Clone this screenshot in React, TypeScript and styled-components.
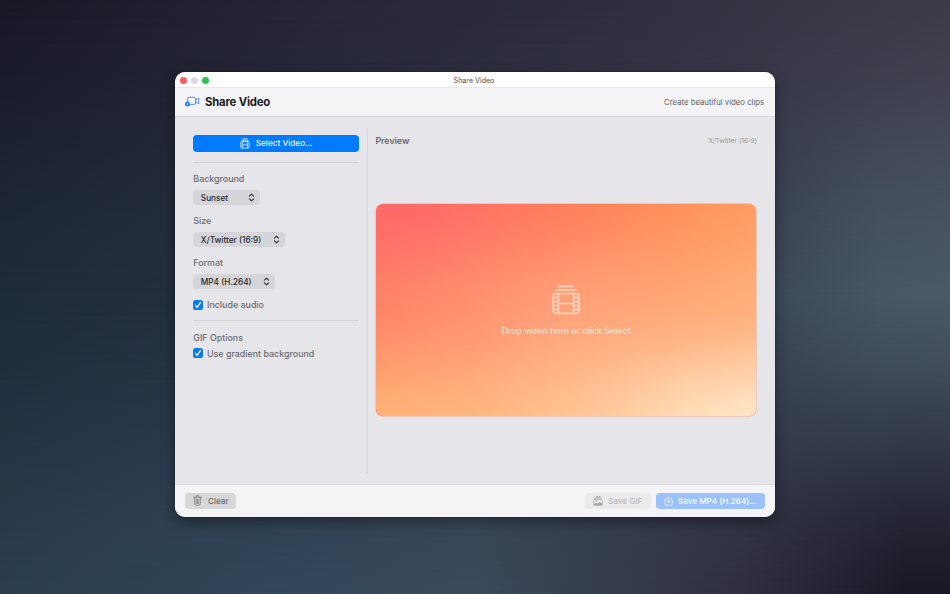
import React from "react";
import styled, { createGlobalStyle, css } from "styled-components";

const Global = createGlobalStyle`
  * { box-sizing: border-box; }
  html, body { margin: 0; padding: 0; }
  body { font-family: Inter, "Liberation Sans", sans-serif; font-size: 9px; overflow: hidden; }
  button { font-family: inherit; border: 0; margin: 0; padding: 0; }
  svg { display: block; flex: none; }
`;

type MeshRows = { top: string; middle: string; bottom: string };

/* A three-row colour mesh: every row is a horizontal ramp faded over the one above it. */
const mesh = ({ top, middle, bottom }: MeshRows) => css`
  position: relative;
  isolation: isolate;
  background: linear-gradient(to right, ${top});
  &::before, &::after {
    content: "";
    position: absolute;
    inset: 0;
    z-index: -1;
  }
  &::before {
    background: linear-gradient(to right, ${middle});
    mask-image: linear-gradient(to bottom, transparent, rgba(0, 0, 0, 0.2) 12%, rgba(0, 0, 0, 0.8) 38%, #000 50%);
  }
  &::after {
    background: linear-gradient(to right, ${bottom});
    mask-image: linear-gradient(to bottom, transparent 50%, rgba(0, 0, 0, 0.2) 62%, rgba(0, 0, 0, 0.8) 88%, #000);
  }
`;

const Desktop = styled.div`
  width: 950px;
  height: 594px;
  display: grid;
  justify-content: center;
  align-content: start;
  padding-top: 71.6px;
  ${mesh({
    top: "#1a1827, #272636 35%, #302e3e 65%, #3f3a49",
    middle: "#1e2b3b, #2a3544 40%, #3b4857 80%, #475866 93%, #4a5a68",
    bottom: "#2b3d4c, #33475a 30%, #3b4a5a 50%, #302f40 78%, #1b1726 95%",
  })}
`;

const Window = styled.main`
  width: 599.4px;
  height: 445px;
  display: flex;
  flex-direction: column;
  border-radius: 10px;
  overflow: hidden;
  background: #e6e5ea;
  box-shadow: 0 0 1px rgba(0, 0, 0, 0.6), 0 5px 14px rgba(0, 0, 0, 0.4);
`;

const TitleBar = styled.header`
  flex: none;
  height: 15.4px;
  display: grid;
  grid-template-columns: 60px 1fr 62px;
  align-items: center;
  background: #fff;
  color: #4c4c4e;
  font-size: 7.1px;
  line-height: 15px;
  text-align: center;
`;

const WindowName = styled.span`
  padding-top: 1px;
`;

const Lights = styled.div`
  display: flex;
  gap: 4px;
  padding: 2px 0 0 4.7px;
`;

const Light = styled.span<{ $color: string }>`
  width: 7px;
  height: 7px;
  border-radius: 50%;
  background: ${(p) => p.$color};
`;

const Toolbar = styled.div`
  flex: none;
  height: 30px;
  display: flex;
  align-items: center;
  padding: 0 10.5px 0 9.7px;
  background: #f4f4f6;
  border-top: 1px solid #e8e8ea;
  border-bottom: 1px solid #d8d8dc;
`;

const Title = styled.h1`
  margin: 0 auto 0 5px;
  font-size: 11.3px;
  font-weight: 700;
  letter-spacing: -0.17px;
  color: #1b1b1d;
`;

const Tagline = styled.span`
  font-size: 7.75px;
  color: #5c5c5f;
`;

const Body = styled.div`
  flex: 1;
  min-height: 0;
  display: flex;
  padding: 11px 18px 11px;
`;

const Sidebar = styled.aside`
  width: 174.5px;
  padding: 7px 8px 0 0;
  border-right: 1px solid #d4d3d8;
  display: flex;
  flex-direction: column;
  align-items: flex-start;
`;

const SelectButton = styled.button`
  width: 165.7px;
  height: 17px;
  margin-bottom: 10px;
  display: flex;
  align-items: center;
  justify-content: center;
  gap: 6px;
  border-radius: 4px;
  background: #007aff;
  color: #e9f3ff;
  font-size: 8.2px;
  font-weight: 550;
`;

const Rule = styled.div`
  flex: none;
  width: 165.5px;
  height: 1px;
  background: #d4d3d8;
`;

const Field = styled.div`
  display: flex;
  flex-direction: column;
  align-items: flex-start;
  gap: 5px;
  height: 42px;
`;

const Label = styled.span`
  color: #6b6b6f;
  font-size: 8.9px;
  font-weight: 550;
  line-height: 13px;
  white-space: nowrap;
`;

const Fields = styled.div`
  padding-top: 9.4px;
`;

const Popup = styled.button<{ $width: number }>`
  width: ${(p) => p.$width}px;
  height: 15px;
  display: flex;
  align-items: center;
  justify-content: space-between;
  padding: 0 5px 0 7.5px;
  border-radius: 4px;
  background: #d6d5da;
  color: #29292b;
  font-size: 8.25px;
  font-weight: 550;
  white-space: nowrap;
`;

const CheckRow = styled.label`
  display: flex;
  align-items: center;
  gap: 3.7px;
  height: 13px;
`;

const CheckBox = styled.span`
  width: 10px;
  height: 10px;
  display: grid;
  place-items: center;
  border-radius: 2.6px;
  background: #0a7aef;
`;

const AudioOption = styled.div`
  height: 22px;
`;

const GifOptions = styled.section`
  padding-top: 9.6px;
  display: grid;
  gap: 3px;
`;

const PreviewPane = styled.section`
  flex: 1;
  padding-left: 7.6px;
`;

const PreviewHeader = styled.div`
  display: flex;
  align-items: center;
  justify-content: space-between;
  height: 26px;
`;

const PreviewTitle = styled.h2`
  margin: 0;
  font-size: 8.8px;
  font-weight: 600;
  color: #68686c;
`;

const Ratio = styled.span`
  font-size: 6.75px;
  color: #98989c;
`;

const DropZone = styled.div`
  width: 381.5px;
  height: 214.5px;
  margin-top: 49px;
  display: flex;
  flex-direction: column;
  align-items: center;
  border: 1px solid #eac7b7;
  border-radius: 8px;
  overflow: hidden;
  padding-top: 81px;
  ${mesh({
    top: "#ff6868, #ff6b68 15%, #ff7f5b 50%, #ff985f 90%, #ff9c66",
    middle: "#ff8567, #ff9270 25%, #ffa27b 50%, #ffa877 75%, #ffb07c",
    bottom: "#ffb175, #ffb67e 25%, #ffc595 55%, #ffddb8 82%, #ffe5c8",
  })}
`;

const DropText = styled.p`
  margin: 9px 0 0;
  font-size: 8.85px;
  font-weight: 550;
  line-height: 13px;
  color: rgba(255, 244, 235, 0.8);
`;

const Footer = styled.footer`
  flex: none;
  height: 32.4px;
  display: flex;
  align-items: center;
  gap: 5px;
  padding: 0 10.2px;
  background: #f4f4f6;
  border-top: 1px solid #d8d8dc;
`;

const Action = styled.button<{ $width: number; $kind: "plain" | "disabled" | "primary" }>`
  width: ${(p) => p.$width}px;
  height: 16px;
  display: flex;
  align-items: center;
  gap: 5.5px;
  padding-left: 8px;
  border-radius: 4px;
  font-size: 8.15px;
  font-weight: 500;
  white-space: nowrap;
  ${(p) => p.$kind === "plain" && css`background: #d7d7d9; color: #6c6c6f; margin-right: auto;`}
  ${(p) => p.$kind === "disabled" && css`background: #ebebed; color: #b6b6b9;`}
  ${(p) => p.$kind === "primary" && css`background: #9bc1fd; color: #f8fbff;`}
`;

const CameraIcon = () => (
  <svg width="15" height="12" viewBox="0 0 15 12" fill="none" stroke="#2f7fe8" strokeWidth="0.85" strokeLinejoin="round">
    <path d="M2.6 6V2.7Q2.6 1.3 4 1.3H9.2Q10.6 1.3 10.6 2.7V7Q10.6 8.4 9.2 8.4H5" />
    <path d="M10.7 4.1 13.8 2V7.8L10.7 5.8" />
    <circle cx="2.5" cy="8" r="2.5" fill="#1c74e6" stroke="none" />
    <path d="M2.5 6.8V9.2M1.3 8H3.7" stroke="#f4f4f6" strokeWidth="0.6" />
  </svg>
);

const FilmIcon = ({ size, stroke, color }: { size: number; stroke: number; color: string }) => (
  <svg width={size} height={size} viewBox="0 0 30 30" fill="none">
    <g opacity="0.68" stroke={color} strokeWidth={stroke} strokeLinecap="round">
      <path d="M7.8 1.4H22.2M5.2 4.9H24.8" />
      <rect x="2.2" y="8.7" width="25.6" height="19.6" rx="2.4" />
      <path d="M7.4 8.7V28.3M22.6 8.7V28.3M7.4 18.5H22.6" />
      <path d="M2.2 12.7H7.4M2.2 16.6H7.4M2.2 20.5H7.4M2.2 24.4H7.4M22.6 12.7H27.8M22.6 16.6H27.8M22.6 20.5H27.8M22.6 24.4H27.8" />
    </g>
  </svg>
);

/* Simplified film stack that stays legible at text size. */
const SmallFilmIcon = () => (
  <svg width="10" height="11" viewBox="0 0 10 11" fill="none" stroke="#c4dfff" strokeWidth="0.9" strokeLinecap="round">
    <path d="M2.8 0.8H7.2M1.8 2.2H8.2" />
    <rect x="0.7" y="3.5" width="8.6" height="6.7" rx="1" />
    <path d="M2.7 3.6V10M7.3 3.6V10M2.7 6.9H7.3" />
    <path d="M1 5.7H2.6M1 7.9H2.6M7.4 5.7H9M7.4 7.9H9" strokeWidth="0.6" />
  </svg>
);

const Chevrons = () => (
  <svg width="7" height="9" viewBox="0 0 7 9" fill="none" stroke="#2c2c2f" strokeWidth="1.1" strokeLinecap="round" strokeLinejoin="round">
    <path d="M1.4 3.2 3.5 1.2 5.6 3.2M1.4 5.8 3.5 7.8 5.6 5.8" />
  </svg>
);

const CheckIcon = () => (
  <svg width="8" height="8" viewBox="0 0 8 8" fill="none" stroke="#fff" strokeWidth="1.3" strokeLinecap="round" strokeLinejoin="round">
    <path d="M1.5 4.3 3.2 6.3 6.4 1.5" />
  </svg>
);

const TrashIcon = () => (
  <svg width="9" height="11" viewBox="0 0 9 11" fill="none" stroke="#79797c" strokeWidth="0.75" strokeLinecap="round" strokeLinejoin="round">
    <path d="M0.6 2.2H8.4M3 2.1V1.3Q3 0.6 3.7 0.6H5.3Q6 0.6 6 1.3V2.1" />
    <path d="M1.3 2.3 1.8 9.2Q1.9 10.3 2.9 10.3H6.1Q7.1 10.3 7.2 9.2L7.7 2.3M3.1 4 3.3 8.6M4.5 4V8.6M5.9 4 5.7 8.6" />
  </svg>
);

const PhotosIcon = () => (
  <svg width="10" height="10" viewBox="0 0 10 10" fill="none" stroke="#a3a3a6" strokeWidth="0.8" strokeLinecap="round">
    <path d="M2.9 0.6H7.1M1.8 1.9H8.2" />
    <rect x="0.6" y="3.2" width="8.8" height="6.2" rx="1.4" />
    <path d="M1 8.7 3.4 6.5 4.8 7.7 6.8 5.7 9 7.6V9.1H1Z" fill="#a3a3a6" stroke="none" />
    <circle cx="3" cy="5.1" r="0.8" fill="#a3a3a6" stroke="none" />
  </svg>
);

const DownloadIcon = () => (
  <svg width="9" height="10" viewBox="0 0 9 10" fill="none" stroke="#f0f6ff" strokeWidth="0.8" strokeLinecap="round" strokeLinejoin="round">
    <path d="M3 2.9H1.8Q0.8 2.9 0.8 3.9V8.3Q0.8 9.3 1.8 9.3H7.2Q8.2 9.3 8.2 8.3V3.9Q8.2 2.9 7.2 2.9H6" />
    <path d="M4.5 0.7V6.5M3 5.1 4.5 6.6 6 5.1" />
  </svg>
);

const fields = [
  { label: "Background", value: "Sunset", width: 66.5 },
  { label: "Size", value: "X/Twitter (16:9)", width: 91.5 },
  { label: "Format", value: "MP4 (H.264)", width: 81.5 },
];

const Check = ({ children }: { children: string }) => (
  <CheckRow>
    <CheckBox><CheckIcon /></CheckBox>
    <Label>{children}</Label>
  </CheckRow>
);

export default function App() {
  return (
    <>
      <Global />
      <Desktop>
        <Window>
          <TitleBar>
            <Lights>
              <Light $color="#fb5d60" />
              <Light $color="#d9dadd" />
              <Light $color="#2fc251" />
            </Lights>
            <WindowName>Share Video</WindowName>
          </TitleBar>
          <Toolbar>
            <CameraIcon />
            <Title>Share Video</Title>
            <Tagline>Create beautiful video clips</Tagline>
          </Toolbar>
          <Body>
            <Sidebar>
              <SelectButton>
                <SmallFilmIcon />
                Select Video...
              </SelectButton>
              <Rule />
              <Fields>
                {fields.map((f) => (
                  <Field key={f.label}>
                    <Label>{f.label}</Label>
                    <Popup $width={f.width}>
                      {f.value}
                      <Chevrons />
                    </Popup>
                  </Field>
                ))}
              </Fields>
              <AudioOption>
                <Check>Include audio</Check>
              </AudioOption>
              <Rule />
              <GifOptions>
                <Label>GIF Options</Label>
                <Check>Use gradient background</Check>
              </GifOptions>
            </Sidebar>
            <PreviewPane>
              <PreviewHeader>
                <PreviewTitle>Preview</PreviewTitle>
                <Ratio>X/Twitter (16:9)</Ratio>
              </PreviewHeader>
              <DropZone>
                <FilmIcon size={30} stroke={1.7} color="#ffebde" />
                <DropText>Drop video here or click Select</DropText>
              </DropZone>
            </PreviewPane>
          </Body>
          <Footer>
            <Action $width={51} $kind="plain"><TrashIcon />Clear</Action>
            <Action $width={66} $kind="disabled"><PhotosIcon />Save GIF</Action>
            <Action $width={109} $kind="primary"><DownloadIcon />Save MP4 (H.264)...</Action>
          </Footer>
        </Window>
      </Desktop>
    </>
  );
}
